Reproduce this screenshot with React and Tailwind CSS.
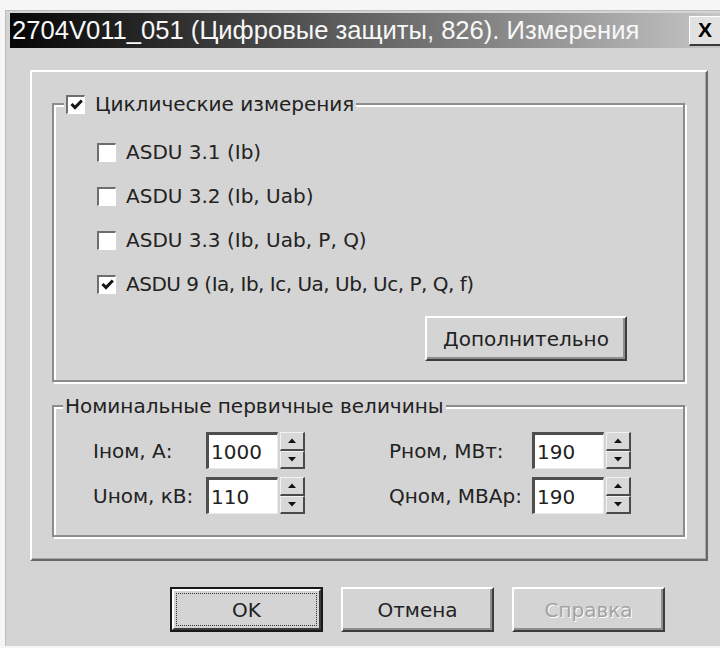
import React from "react";

const face = "bg-[#d4d4d4]";

function CheckBox({ checked }) {
  return (
    <span className="flex h-[19px] w-[19px] shrink-0 items-center justify-center border-b border-l-2 border-r border-t-2 border-b-white border-l-[#6e6e6e] border-r-white border-t-[#6e6e6e] bg-white">
      {checked && (
        <svg width="13" height="11" viewBox="0 0 13 11">
          <path d="M1.5 5 L5 8.6 L11.8 1.5" stroke="#151515" strokeWidth="3" fill="none" />
        </svg>
      )}
    </span>
  );
}

function Group({ legend, legendLeft, className, children }) {
  return (
    <div className={`relative border-2 border-[#8c8c8c] shadow-[inset_2px_2px_0_#fff,2px_2px_0_#fff] ${className}`}>
      <div className={`absolute top-[-1px] flex -translate-y-1/2 items-center gap-[10px] bg-[#d4d4d4] px-[2px] ${legendLeft}`}>
        {legend}
      </div>
      {children}
    </div>
  );
}

function Option({ checked, children, className = "" }) {
  return (
    <div className="flex h-[44px] items-center gap-[10px]">
      <CheckBox checked={checked} />
      <span className={className}>{children}</span>
    </div>
  );
}

function Arrow({ up }) {
  return (
    <svg width="8" height="5" viewBox="0 0 8 5">
      <path d={up ? "M0 5 L4 0.5 L8 5 Z" : "M0 0 L4 4.5 L8 0 Z"} fill="#111" />
    </svg>
  );
}

function SpinField({ value }) {
  return (
    <div className="flex h-[37px]">
      <div className="flex w-[72px] items-center border-b border-l-[3px] border-r border-t-[3px] border-b-[#eaeaea] border-l-[#4e4e4e] border-r-[#eaeaea] border-t-[#4e4e4e] bg-white pl-[2px]">
        {value}
      </div>
      <div className="ml-[2px] flex w-[25px] flex-col">
        <div className="flex flex-1 items-center justify-center border-b-2 border-l border-r-2 border-t border-b-[#4a4a4a] border-l-[#f2f2f2] border-r-[#4a4a4a] border-t-[#f2f2f2] bg-[#d8d8d8]">
          <Arrow up />
        </div>
        <div className="flex flex-1 items-center justify-center border-b-2 border-l border-r-2 border-t border-b-[#4a4a4a] border-l-[#f2f2f2] border-r-[#4a4a4a] border-t-[#f2f2f2] bg-[#d8d8d8]">
          <Arrow />
        </div>
      </div>
    </div>
  );
}

function Field({ label, labelWidth, value }) {
  return (
    <div className="flex items-center">
      <span className={`${labelWidth} shrink-0`}>{label}</span>
      <SpinField value={value} />
    </div>
  );
}

function Button({ children, className = "", disabled = false }) {
  return (
    <div
      className={`flex h-[45px] w-[153px] items-center justify-center border-b-2 border-l-2 border-r-2 border-t-2 border-b-[#3c3c3c] border-l-white border-r-[#3c3c3c] border-t-white shadow-[inset_-2px_-2px_0_#8e8e8e] ${face} ${
        disabled ? "text-[#a2a2a2] [text-shadow:1px_1px_0_#fff]" : ""
      } ${className}`}
    >
      {children}
    </div>
  );
}

export default function App() {
  return (
    <div
      className="h-[648px] w-[720px] overflow-hidden bg-[#f6f6f6] pl-[5px] pt-[10px] text-[20px] text-[#222]"
      style={{ fontFamily: '"DejaVu Sans", "Noto Sans", sans-serif' }}
    >
      <div className={`h-[636px] w-[715px] border-l border-t border-[#bcbcbc] pl-[4px] pt-[2px] ${face}`}>
        {/* caption bar */}
        <div className="flex h-[35px] items-center justify-between bg-gradient-to-r from-[#070707] via-[#5a5a5a] via-45% to-[#c6c6c6]">
          <span
            className="pl-[2px] text-[25.6px] leading-none text-[#f8f8f8]"
            style={{ fontFamily: '"Liberation Sans", Arial, sans-serif' }}
          >
            2704V011_051 (Цифровые защиты, 826). Измерения
          </span>
          <div
            className="flex h-[30px] w-[31px] items-center justify-center border-b-2 border-l border-t border-b-[#3a3a3a] border-l-white border-t-white bg-[#e2e2e2] text-[21px] font-bold text-black"
            style={{ fontFamily: '"Liberation Sans", Arial, sans-serif' }}
          >
            X
          </div>
        </div>

        {/* page panel */}
        <div className="ml-[20px] mt-[22px] flex h-[491px] w-[678px] flex-col border-2 border-b-[#686868] border-l-white border-r-[#686868] border-t-white pl-[20px] pr-[21px] pt-[31px] shadow-[inset_-1px_-1px_0_#a6a6a6]">
          <Group
            className="flex h-[279px] flex-col pl-[43px] pt-[25px]"
            legendLeft="left-[10px]"
            legend={
              <>
                <CheckBox checked />
                <span>Циклические измерения</span>
              </>
            }
          >
            <Option>ASDU 3.1 (Ib)</Option>
            <Option>ASDU 3.2 (Ib, Uab)</Option>
            <Option>ASDU 3.3 (Ib, Uab, P, Q)</Option>
            <Option checked className="tracking-[-0.5px]">
              ASDU 9 (Ia, Ib, Ic, Ua, Ub, Uc, P, Q, f)
            </Option>
            <Button className="mr-[56px] mt-[10px] h-[41px] w-[202px] self-end">Дополнительно</Button>
          </Group>

          <Group
            className="mt-[23px] flex h-[132px] gap-[84px] pl-[39px] pt-[25px]"
            legendLeft="left-[9px]"
            legend={<span>Номинальные первичные величины</span>}
          >
            <div className="flex flex-col gap-[8px]">
              <Field label="Iном, А:" labelWidth="w-[113px]" value="1000" />
              <Field label="Uном, кВ:" labelWidth="w-[113px]" value="110" />
            </div>
            <div className="flex flex-col gap-[8px]">
              <Field label="Pном, МВт:" labelWidth="w-[143px]" value="190" />
              <Field label="Qном, МВАр:" labelWidth="w-[143px]" value="190" />
            </div>
          </Group>
        </div>

        {/* dialog buttons */}
        <div className="ml-[160px] mt-[26px] flex gap-[18px]">
          <div className="h-[45px] w-[153px] border-2 border-[#1a1a1a]">
            <div className={`flex h-full w-full border-2 border-b-[#3c3c3c] border-l-white border-r-[#3c3c3c] border-t-white p-[2px] ${face}`}>
              <div className="flex flex-1 items-center justify-center border border-dotted border-[#333]">OK</div>
            </div>
          </div>
          <Button>Отмена</Button>
          <Button disabled>Справка</Button>
        </div>
      </div>
    </div>
  );
}
